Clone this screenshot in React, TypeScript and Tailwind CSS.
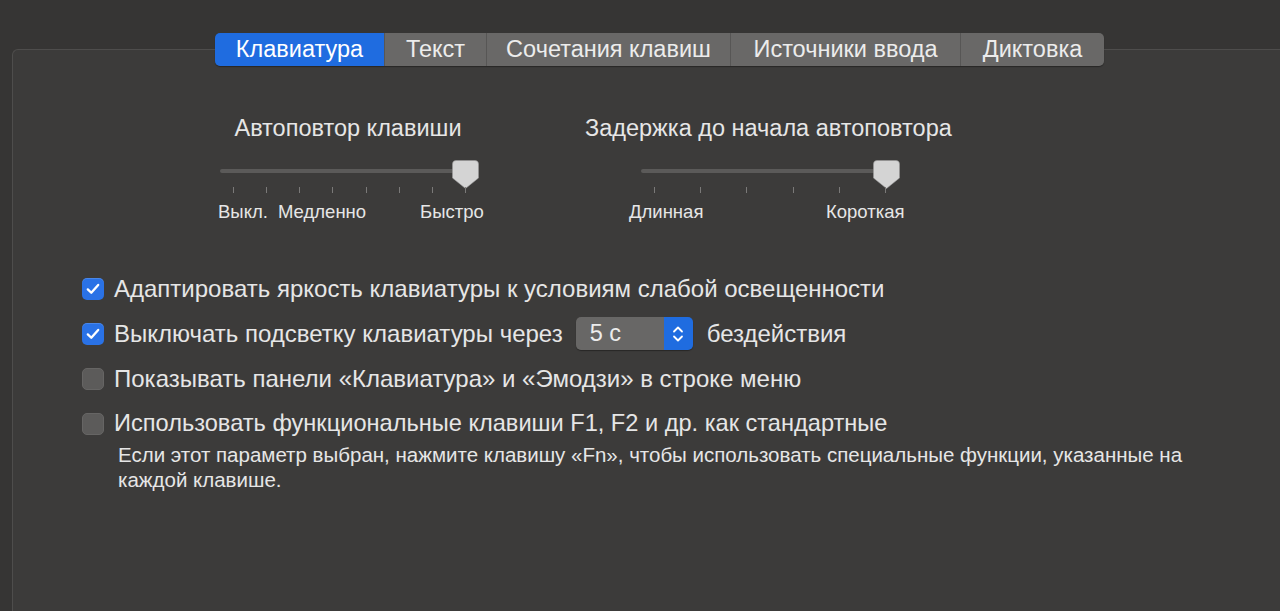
import React from "react";

const font = { fontFamily: '"Liberation Sans", Arial, sans-serif' };

function Thumb() {
  return (
    <svg width="27" height="29" viewBox="0 0 27 29" className="block">
      <path
        d="M4 0.5 H23 A3.5 3.5 0 0 1 26.5 4 V18 L13.5 28.5 L0.5 18 V4 A3.5 3.5 0 0 1 4 0.5 Z"
        fill="#d4d4d4"
        stroke="#9a9a9a"
        strokeWidth="0.6"
      />
    </svg>
  );
}

function Check({ on }: { on: boolean }) {
  if (on)
    return (
      <div className="w-[22px] h-[22px] shrink-0 rounded-[5px] bg-[#2a72e6] flex items-center justify-center shadow-[inset_0_1px_0_rgba(255,255,255,0.15)]">
        <svg width="14" height="12" viewBox="0 0 14 12">
          <path d="M1.8 6.4 L5.3 9.8 L12.2 1.9" fill="none" stroke="#fff" strokeWidth="2.3" strokeLinecap="round" strokeLinejoin="round" />
        </svg>
      </div>
    );
  return <div className="w-[22px] h-[22px] shrink-0 rounded-[5px] bg-[#5c5b5a] border border-[#666564]" />;
}

type Label = { text: string; left: number };

function Slider({
  trackLeft,
  tickCount,
  tickStep,
  labels,
}: {
  trackLeft: number;
  tickCount: number;
  tickStep: number;
  labels: Label[];
}) {
  const ticks = Array.from({ length: tickCount }, (_, i) => i);
  return (
    <div className="relative h-[66px] mt-[18px]">
      <div className="absolute top-[9px] h-[4px] w-[254px] rounded-full bg-[#5b5a59]" style={{ left: trackLeft }} />
      <div className="absolute top-0" style={{ left: trackLeft + 232 }}>
        <Thumb />
      </div>
      {ticks.map((i) => (
        <div
          key={i}
          className="absolute top-[27px] w-[1px] h-[6px] bg-[#7a7978]"
          style={{ left: trackLeft + 13 + i * tickStep }}
        />
      ))}
      {labels.map((l) => (
        <span key={l.text} className="absolute top-[41px] text-[18.5px] leading-[22px] whitespace-nowrap" style={{ left: l.left }}>
          {l.text}
        </span>
      ))}
    </div>
  );
}

export default function App() {
  const tabs = ["Клавиатура", "Текст", "Сочетания клавиш", "Источники ввода", "Диктовка"];
  const tabW = [169, 102, 244, 230, 144];
  return (
    <div className="w-[1280px] h-[611px] overflow-hidden bg-[#363534] text-[#e6e6e6]" style={font}>
      <div className="pt-[49px] pl-[12px]">
        <div className="w-[1300px] h-[600px] rounded-tl-[6px] border-t border-l border-[#4e4d4c] bg-[#3c3b3a]">
          {/* tabs */}
          <div className="flex -mt-[17px] ml-[202px]">
            <div className="flex h-[33px] rounded-[5px] overflow-hidden shadow-[0_1px_1px_rgba(0,0,0,0.35)] text-[23.5px]">
              {tabs.map((t, i) => (
                <div
                  key={t}
                  style={{ width: tabW[i] }}
                  className={
                    i === 0
                      ? "flex items-center justify-center bg-[#1f6ce0] text-white"
                      : "flex items-center justify-center bg-[#696867] text-[#ececec] border-l border-[#575655]"
                  }
                >
                  {t}
                </div>
              ))}
            </div>
          </div>

          {/* sliders */}
          <div className="flex mt-[48px]">
            <div className="w-[280px] ml-[197px] flex flex-col">
              <div className="text-[23.5px] leading-[28px] text-center -ml-[4px]">Автоповтор клавиши</div>
              <Slider
                trackLeft={10}
                tickCount={8}
                tickStep={33.14}
                labels={[
                  { text: "Выкл.", left: 8 },
                  { text: "Медленно", left: 68 },
                  { text: "Быстро", left: 210 },
                ]}
              />
            </div>

            <div className="w-[380px] ml-[95px] flex flex-col">
              <div className="text-[23.5px] leading-[28px] whitespace-nowrap">Задержка до начала автоповтора</div>
              <Slider
                trackLeft={56}
                tickCount={6}
                tickStep={46.2}
                labels={[
                  { text: "Длинная", left: 44 },
                  { text: "Короткая", left: 241 },
                ]}
              />
            </div>
          </div>

          {/* checkboxes */}
          <div className="ml-[69px] mt-[40px] flex flex-col text-[24px]">
            <div className="flex items-center h-[45px]">
              <Check on />
              <span className="ml-[10px] whitespace-nowrap">Адаптировать яркость клавиатуры к условиям слабой освещенности</span>
            </div>
            <div className="flex items-center h-[45px]">
              <Check on />
              <span className="ml-[10px] whitespace-nowrap">Выключать подсветку клавиатуры через</span>
              <div className="ml-[13px] flex h-[33px] w-[117px] rounded-[5px] overflow-hidden shadow-[0_1px_1px_rgba(0,0,0,0.35)]">
                <div className="flex-1 bg-[#686766] flex items-center pl-[14px] text-[23.5px] text-[#ececec]">5 с</div>
                <div className="w-[29px] bg-[#1f6ce0] flex items-center justify-center">
                  <svg width="14" height="22" viewBox="0 0 14 22">
                    <path d="M3 8.5 L7 4.5 L11 8.5" fill="none" stroke="#fff" strokeWidth="1.8" strokeLinecap="round" strokeLinejoin="round" />
                    <path d="M3 13.5 L7 17.5 L11 13.5" fill="none" stroke="#fff" strokeWidth="1.8" strokeLinecap="round" strokeLinejoin="round" />
                  </svg>
                </div>
              </div>
              <span className="ml-[14px]">бездействия</span>
            </div>
            <div className="flex items-center h-[45px]">
              <Check on={false} />
              <span className="ml-[10px] whitespace-nowrap">Показывать панели «Клавиатура» и «Эмодзи» в строке меню</span>
            </div>
            <div className="flex items-center h-[45px]">
              <Check on={false} />
              <span className="ml-[10px] whitespace-nowrap text-[23.6px]">Использовать функциональные клавиши F1, F2 и др. как стандартные</span>
            </div>
            <div className="ml-[36px] -mt-[4px] w-[1090px] text-[20.5px] leading-[25px]">
              Если этот параметр выбран, нажмите клавишу «Fn», чтобы использовать специальные функции, указанные на каждой клавише.
            </div>
          </div>
        </div>
      </div>
    </div>
  );
}
